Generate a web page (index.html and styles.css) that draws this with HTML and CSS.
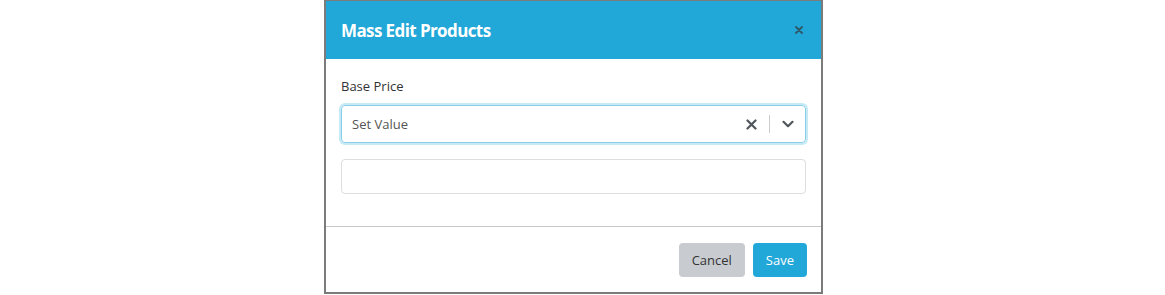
FILE: index.html
```html
<!DOCTYPE html>
<html lang="en">
<head>
  <meta charset="UTF-8" />
  <title>Mass Edit Products</title>
  <link rel="stylesheet" href="styles.css">
</head>
<body>
  <div class="modal">
    <div class="modal-header">
      <h2 class="modal-title">Mass Edit Products</h2>
      <button class="close-btn" aria-label="Close">
        <svg width="8" height="8" viewBox="0 0 8 8"><path d="M1 1L7 7M7 1L1 7" stroke="currentColor" stroke-width="1.8" stroke-linecap="round"/></svg>
      </button>
    </div>

    <div class="modal-body">
      <label class="field-label">Base Price</label>
      <div class="select-box">
        <span class="select-value">Set Value</span>
        <span class="select-clear">
          <svg width="11" height="11" viewBox="0 0 11 11"><path d="M1.5 1.5L9.5 9.5M9.5 1.5L1.5 9.5" stroke="currentColor" stroke-width="2.2" stroke-linecap="round"/></svg>
        </span>
        <span class="select-sep"></span>
        <span class="select-arrow">
          <svg width="12" height="8" viewBox="0 0 12 8"><path d="M1.5 1.8L6 6.2L10.5 1.8" fill="none" stroke="currentColor" stroke-width="2.2" stroke-linecap="round" stroke-linejoin="round"/></svg>
        </span>
      </div>
      <input type="text" class="text-input" />
    </div>

    <div class="modal-footer">
      <button class="btn btn-cancel">Cancel</button>
      <button class="btn btn-save">Save</button>
    </div>
  </div>
</body>
</html>
```
FILE: styles.css
```css
body {
  margin: 0;
  background: #fff;
  font-family: "Open Sans", "Noto Sans", sans-serif;
  color: #333;
}
.modal {
  margin-left: 324px;
  width: 495px;
  border: 2px solid #7b7b7b;
  border-top-width: 1px;
  background: #fff;
}
.modal-header {
  height: 58px;
  background: #21a7d8;
  display: flex;
  align-items: center;
  justify-content: space-between;
  padding: 0 18px 0 15px;
}
.modal-title {
  margin: 0;
  font-size: 17px;
  font-weight: 700;
  color: #fff;
  letter-spacing: -0.6px;
}
.close-btn {
  background: none;
  border: none;
  padding: 0;
  color: #2f5867;
  display: flex;
  cursor: pointer;
}
.modal-body {
  padding: 16px 15px 32px;
  border-bottom: 1px solid #c9c9c9;
}
.field-label {
  display: block;
  font-size: 13px;
  line-height: 22px;
  margin-bottom: 8px;
}
.select-box {
  height: 36px;
  border: 1px solid #86cfea;
  border-radius: 4px;
  box-shadow: 0 0 0 2px #c6e9f5;
  display: flex;
  align-items: center;
  padding-left: 10px;
}
.select-value {
  flex: 1;
  font-size: 13px;
  color: #555;
}
.select-clear {
  color: #50565c;
  display: flex;
  padding: 0 12px 0 8px;
}
.select-sep {
  width: 1px;
  height: 18px;
  background: #ccc;
}
.select-arrow {
  color: #50565c;
  display: flex;
  padding: 0 11px 0 12px;
}
.text-input {
  display: block;
  box-sizing: border-box;
  width: 100%;
  height: 35px;
  margin-top: 16px;
  border: 1px solid #dedede;
  border-radius: 4px;
}
.modal-footer {
  display: flex;
  justify-content: flex-end;
  gap: 8px;
  padding: 16px 14px 15px;
}
.btn {
  height: 34px;
  border: none;
  border-radius: 4px;
  font-family: inherit;
  font-size: 13px;
  padding: 0 13px;
  cursor: pointer;
}
.btn-cancel {
  background: #c8ccd1;
  color: #333;
}
.btn-save {
  background: #21a7d8;
  color: #fff;
}
```
